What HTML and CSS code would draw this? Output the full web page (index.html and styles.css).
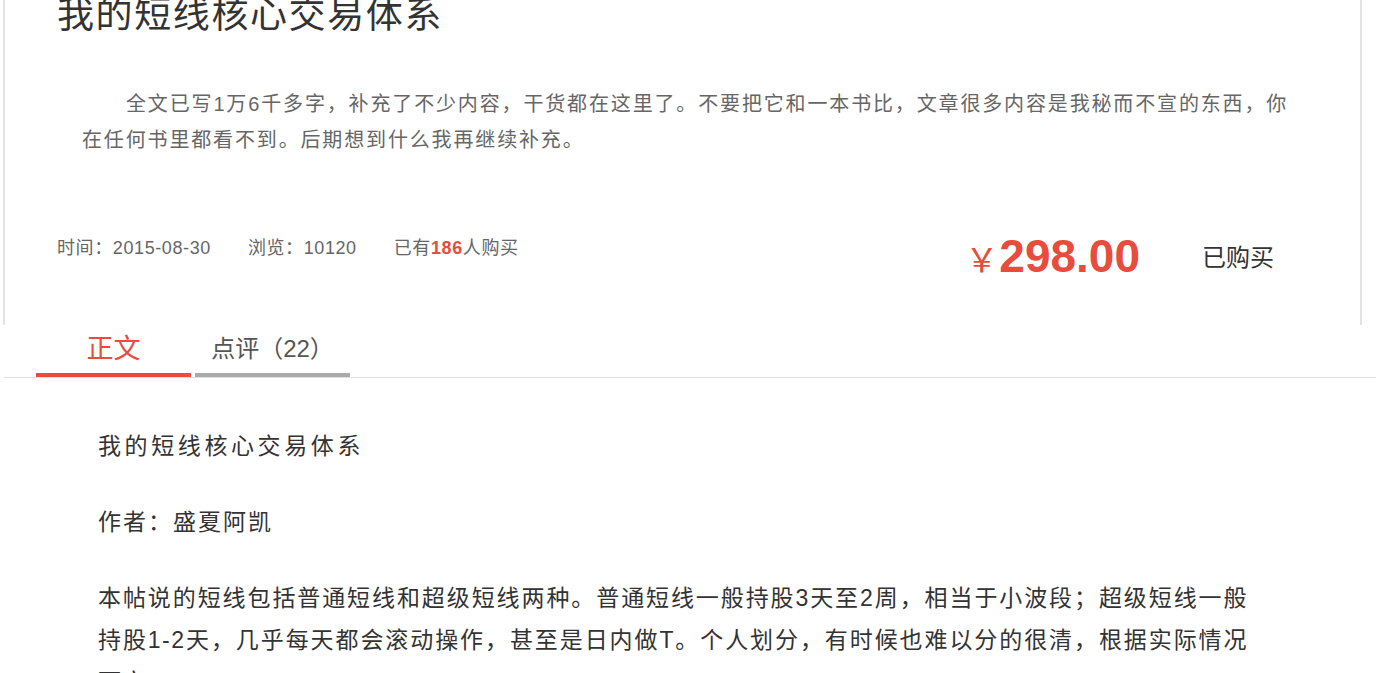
FILE: index.html
```html
<!DOCTYPE html>
<html lang="zh-CN">
<head>
    <meta charset="UTF-8">
    <meta name="viewport" content="width=device-width, initial-scale=1.0">
    <title>我的短线核心交易体系</title>
    <link rel="stylesheet" href="styles.css">
</head>
<body>
<div class="wrap">

    <!-- Article header -->
    <div class="card">
        <h1 class="title">我的短线核心交易体系</h1>
        <p class="desc">全文已写1万6千多字，补充了不少内容，干货都在这里了。不要把它和一本书比，文章很多内容是我秘而不宣的东西，你在任何书里都看不到。后期想到什么我再继续补充。</p>
        <div class="info">
            <div class="meta">
                <span class="meta-item">时间：2015-08-30</span>
                <span class="meta-item">浏览：10120</span>
                <span class="meta-item">已有<b class="buyers">186</b>人购买</span>
            </div>
            <div class="price"><span class="yen">￥</span>298.00</div>
            <div class="bought">已购买</div>
        </div>
    </div>

    <!-- Tabs -->
    <div class="tabs">
        <div class="tab active">正文</div>
        <div class="tab">点评（22）</div>
    </div>

    <!-- Article body -->
    <div class="content">
        <p class="headline">我的短线核心交易体系</p>
        <p class="author">作者：盛夏阿凯</p>
        <p>本帖说的短线包括普通短线和超级短线两种。普通短线一般持股3天至2周，相当于小波段；超级短线一般持股1-2天，几乎每天都会滚动操作，甚至是日内做T。个人划分，有时候也难以分的很清，根据实际情况而定。</p>
    </div>

</div>
</body>
</html>
```

FILE: styles.css
```css
html {
    overflow: hidden;
}
body {
    margin: 0;
    background: #fff;
    font-family: "Liberation Sans", "Noto Sans CJK SC", sans-serif;
    color: #333;
}
.wrap {
    margin-left: 3px;
    width: 1359px;
}
.card {
    border-left: 2px solid #e3e3e3;
    border-right: 2px solid #e3e3e3;
    padding-bottom: 37px;
}
.title {
    margin: 0;
    padding-left: 52px;
    font-size: 37px;
    line-height: 32px;
    letter-spacing: 1.6px;
    font-weight: normal;
    color: #333;
}
.desc {
    margin: 54px 0 0;
    padding: 0 65px 0 77px;
    font-size: 20px;
    line-height: 36px;
    letter-spacing: 1.85px;
    text-indent: 44px;
    color: #666;
}
.info {
    display: flex;
    align-items: center;
    height: 60px;
    margin-top: 70px;
    padding: 0 86px 0 52px;
}
.meta {
    align-self: flex-start;
    display: flex;
    font-size: 18px;
    line-height: 40px;
    letter-spacing: 0.6px;
    color: #666;
}
.meta-item {
    margin-right: 37px;
}
.buyers {
    color: #e74c3c;
}
.price {
    margin-left: auto;
    font-size: 46px;
    font-weight: bold;
    line-height: 60px;
    color: #e74c3c;
}
.yen {
    font-size: 33px;
    font-weight: normal;
    margin-right: 1px;
}
.bought {
    margin-left: 62px;
    font-size: 24px;
    line-height: 60px;
    color: #333;
}
.tabs {
    display: flex;
    gap: 4px;
    padding-left: 32px;
    border-bottom: 1px solid #e0e0e0;
    margin-left: 1px;
    width: 1356px;
}
.tab {
    width: 155px;
    height: 48px;
    line-height: 48px;
    text-align: center;
    font-size: 24px;
    color: #555;
    border-bottom: 4px solid #aaa;
}
.tab.active {
    font-size: 27px;
    color: #e74c3c;
    border-bottom-color: #e74c3c;
}
.content {
    padding: 47px 0 0 95px;
}
.content p {
    width: 1150px;
    margin: 0 0 34px;
    font-size: 23px;
    line-height: 42px;
    letter-spacing: 1.5px;
    text-align: justify;
    color: #333;
}
.content .headline {
    letter-spacing: 3.6px;
}
.content .author {
    letter-spacing: 2px;
}
```
